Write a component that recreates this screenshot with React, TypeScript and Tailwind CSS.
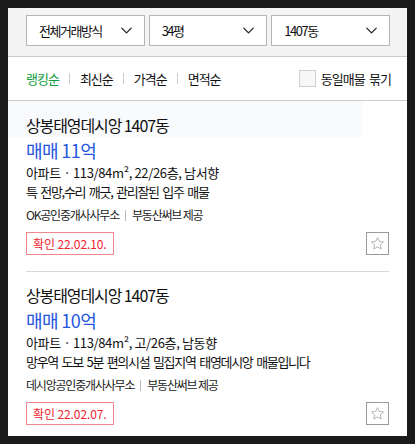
import { ChevronDown } from 'lucide-react'

const font = { fontFamily: '"Noto Sans CJK KR", "Noto Sans", sans-serif' }

interface Listing {
  title: string
  price: string
  detail: string
  desc: string
  agency: string
  date: string
}

const listings: Listing[] = [
  {
    title: '상봉태영데시앙 1407동',
    price: '매매 11억',
    detail: '아파트 · 113/84m², 22/26층, 남서향',
    desc: '특 전망,수리 깨긋, 관리잘된 입주 매물',
    agency: 'OK공인중개사사무소',
    date: '확인 22.02.10.',
  },
  {
    title: '상봉태영데시앙 1407동',
    price: '매매 10억',
    detail: '아파트 · 113/84m², 고/26층, 남동향',
    desc: '망우역 도보 5분 편의시설 밀집지역 태영데시앙 매물입니다',
    agency: '데시앙공인중개사사무소',
    date: '확인 22.02.07.',
  },
]

function Select({ label }: { label: string }) {
  return (
    <div className="h-[31px] border border-[#b5b5b5] bg-white flex items-center justify-between pl-[12px] pr-[8px]">
      <span className="text-[13px] text-[#111] tracking-[-1.5px] [word-spacing:2px]">{label}</span>
      <ChevronDown size={19} strokeWidth={1.6} className="text-[#222]" />
    </div>
  )
}

function StarIcon() {
  return (
    <svg width="15" height="15" viewBox="0 0 24 24" fill="none" stroke="#a8a8a8" strokeWidth="1.4" strokeLinejoin="round">
      <path d="M12 2.5l2.9 6.2 6.6.8-4.9 4.6 1.3 6.6L12 17.4l-5.9 3.3 1.3-6.6-4.9-4.6 6.6-.8z" />
    </svg>
  )
}

function ListingItem({ item, first }: { item: Listing; first: boolean }) {
  return (
    <div className={first ? '' : 'mx-[18px] border-t border-[#d8d8d8]'}>
      <div className={first ? 'pt-[12px] pl-[18px] mr-[45px] bg-[#f9fafc]' : 'pt-[11px]'}>
        <div className="text-[16px] leading-[24px] text-[#111] tracking-[-1.1px]">{item.title}</div>
      </div>
      <div className={first ? 'px-[18px]' : ''}>
        <div className="text-[18px] leading-[26px] text-[#2356e0] tracking-[-0.6px]">{item.price}</div>
        <div className="text-[13px] leading-[19px] text-[#111] tracking-[-0.35px]">{item.detail}</div>
        <div className="text-[13px] leading-[19px] text-[#111] tracking-[-1.3px] [word-spacing:2px]">{item.desc}</div>
        <div className="mt-[5px] flex items-center text-[12px] leading-[18px] text-[#222] tracking-[-1.2px]">
          <span>{item.agency}</span>
          <span className="mx-[6px] w-px h-[11px] bg-[#bbb]" />
          <span>부동산써브 제공</span>
        </div>
        <div className="mt-[8px] pb-[16px] flex items-center justify-between">
          <span className="h-[23px] px-[6px] flex items-center border border-[#f2868d] text-[12px] text-[#f0232f] tracking-[-0.1px]">
            {item.date}
          </span>
          <button className="w-[23px] h-[23px] border border-[#9a9a9a] flex items-center justify-center bg-white">
            <StarIcon />
          </button>
        </div>
      </div>
    </div>
  )
}

export default function App() {
  return (
    <div className="w-[415px] h-[444px] bg-[#1b1b1b] pt-[8px] pl-[8px] overflow-hidden" style={font}>
      <div className="w-[399px] h-[428px] bg-white overflow-hidden">
        <div className="h-[49px] bg-[#f4f4f4] border-b border-[#cccccc] pt-[7px] pl-[18px] pr-[17px]">
          <div className="grid grid-cols-3 gap-[4px]">
            <Select label="전체거래방식" />
            <Select label="34평" />
            <Select label="1407동" />
          </div>
        </div>

        <div className="h-[44px] border-b border-[#cccccc] pl-[18px] pr-[16px] flex items-center justify-between">
          <div className="flex items-center text-[13px] tracking-[-1px] text-[#111]">
            <span className="text-[#0f9d3c]">랭킹순</span>
            <span className="mx-[10px] w-px h-[11px] bg-[#ccc]" />
            <span>최신순</span>
            <span className="mx-[10px] w-px h-[11px] bg-[#ccc]" />
            <span>가격순</span>
            <span className="mx-[10px] w-px h-[11px] bg-[#ccc]" />
            <span>면적순</span>
          </div>
          <label className="flex items-center gap-[5px] text-[13px] tracking-[-0.9px] [word-spacing:2px] text-[#111]">
            <span className="w-[17px] h-[17px] border border-[#cfcfcf] bg-[#f7f7f7]" />
            동일매물 묶기
          </label>
        </div>

        {listings.map((item, i) => (
          <ListingItem key={i} item={item} first={i === 0} />
        ))}
      </div>
    </div>
  )
}
